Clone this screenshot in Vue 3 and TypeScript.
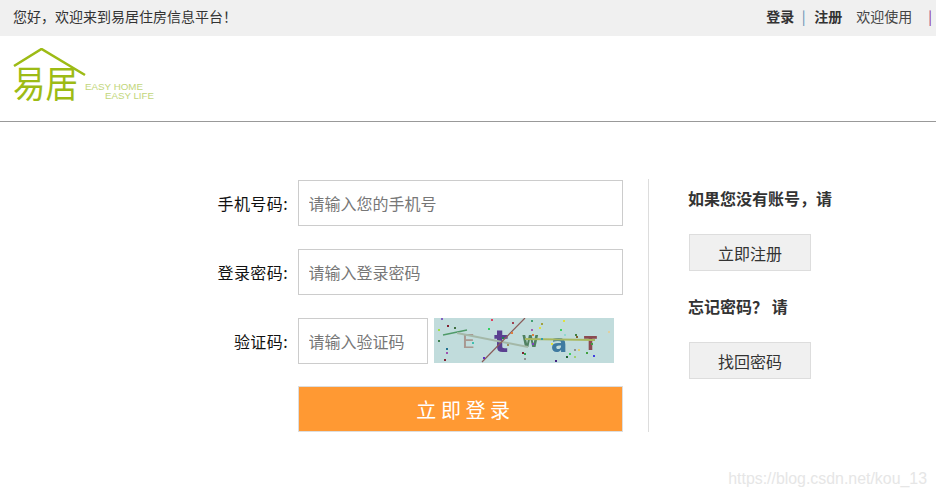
<script setup lang="ts">
const dots: [number, number, string][] = [
  [441,318,'#8060c0'],[491,319,'#e04060'],[447,325,'#802030'],[454,327,'#407040'],[438,329,'#a0e040'],[438,340,'#408050'],[488,328,'#30d060'],[512,322,'#a04050'],[511,332,'#e08040'],[531,320,'#40a070'],[541,323,'#a0a040'],[539,327,'#e0e040'],[531,329,'#a060b0'],[563,320,'#e0e040'],[560,329,'#40d060'],[564,334,'#90d8d0'],[575,334,'#408040'],[576,336,'#806030'],[608,331,'#e0d0a0'],[446,348,'#207090'],[446,352,'#a050b0'],[444,359,'#802030'],[483,357,'#6030c0'],[522,352,'#802030'],[524,353,'#30a050'],[524,358,'#909090'],[555,360,'#402080'],[566,356,'#206030'],[574,356,'#a0d070'],[569,353,'#40d060'],[574,349,'#909090'],[578,349,'#e0d070'],[586,352,'#40a040'],[593,355,'#4040e0'],[551,343,'#e0e040'],[591,343,'#40a040'],[541,338,'#30a0b0'],[532,334,'#e08040'],[532,343,'#8040c0'],[502,337,'#208050'],[472,342,'#40c0b0'],[507,344,'#a09060']
]
</script>

<template>
  <div class="page">
    <div class="topbar">
      <span class="hello">您好，欢迎来到易居住房信息平台！</span>
      <div class="toplinks">
        <b>登录</b><i class="sep blue">|</i><b>注册</b><span class="welcome">欢迎使用</span><i class="sep purple">|</i>
      </div>
    </div>

    <header class="header">
      <svg class="logo" width="150" height="62" viewBox="0 0 150 62" aria-label="易居 EASY HOME EASY LIFE">
        <path d="M1 18 L28.5 1 L72 27" fill="none" stroke="#9dbb15" stroke-width="2.6" />
        <text x="0" y="50" class="logo-cn" textLength="65" lengthAdjust="spacingAndGlyphs">易居</text>
        <text x="72" y="41.5" class="logo-en" textLength="58" lengthAdjust="spacingAndGlyphs">EASY HOME</text>
        <text x="92" y="50.5" class="logo-en" textLength="49" lengthAdjust="spacingAndGlyphs">EASY LIFE</text>
      </svg>
    </header>

    <main class="main">
      <form class="form" @submit.prevent>
        <label class="row">
          <span class="label">手机号码:</span>
          <input class="input wide" placeholder="请输入您的手机号" />
        </label>
        <label class="row">
          <span class="label">登录密码:</span>
          <input class="input wide" type="password" placeholder="请输入登录密码" />
        </label>
        <div class="row">
          <span class="label">验证码:</span>
          <input class="input short" placeholder="请输入验证码" />
          <svg class="captcha" width="180" height="45" viewBox="434 318 180 45">
            <rect x="434" y="318" width="180" height="45" fill="#c1dcdc" />
            <g class="soft">
              <text x="462" y="348" class="cap" fill="#a89890" font-size="20">E</text>
              <text x="494" y="352" class="cap bold" fill="#5a3f90" font-size="30">t</text>
              <text x="522" y="347" class="cap bold" fill="#4f8060" font-size="15">W</text>
              <text x="551" y="352" class="cap bold" fill="#3f7aa0" font-size="24">a</text>
              <text x="584" y="350" class="cap bold" fill="#8a4a50" font-size="19">T</text>
            </g>
            <path d="M443 335 L467 330" stroke="#4f9a68" stroke-width="1.3" fill="none" />
            <path d="M457 333 L528 347" stroke="#a4b8a8" stroke-width="2" fill="none" />
            <path d="M525 339 L595 340" stroke="#a8b860" stroke-width="2" fill="none" />
            <path d="M482 362 L525 318" stroke="#8a5a58" stroke-width="1.2" fill="none" />
            <rect v-for="(d, i) in dots" :key="i" :x="d[0]" :y="d[1]" width="2" height="2" :fill="d[2]" />
          </svg>
        </div>
        <div class="row submit-row">
          <span class="label"></span>
          <button class="submit" type="button">立即登录</button>
        </div>
      </form>

      <aside class="side">
        <h3>如果您没有账号，请</h3>
        <button class="side-btn" type="button">立即注册</button>
        <h3 class="forgot">忘记密码？ 请</h3>
        <button class="side-btn" type="button">找回密码</button>
      </aside>
    </main>

    <div class="watermark">https://blog.csdn.net/kou_13</div>
  </div>
</template>

<style>
html, body { margin: 0; background: #fff; }
</style>

<style scoped>
.page {
  position: relative;
  width: 936px;
  height: 497px;
  overflow: hidden;
  font-family: "Noto Sans CJK SC", "Liberation Sans", sans-serif;
  color: #333;
}
.topbar {
  box-sizing: border-box;
  height: 36px;
  background: #f0f0f0;
  display: flex;
  align-items: center;
  justify-content: space-between;
  padding: 0 4px 4px 13px;
  font-size: 14px;
  line-height: 32px;
}
.toplinks { display: flex; align-items: center; }
.toplinks b { font-weight: 700; color: #333; }
.sep { font-style: normal; }
.blue { color: #5b8fb0; margin: 0 8.6px 0 7.5px; }
.purple { color: #8a1a80; margin-left: 16px; }
.welcome { margin-left: 14px; color: #444; }
.header {
  height: 73px;
  border-bottom: 1px solid #999;
  padding: 12px 0 0 13px;
}
.logo { display: block; }
.logo-cn { font-size: 37px; font-weight: 400; fill: #9dbb15; font-family: "Noto Sans CJK SC", sans-serif; }
.logo-en { font-size: 9.5px; fill: #c2d67a; font-family: "Liberation Sans", sans-serif; }
.main {
  display: flex;
  padding: 58px 0 0 210px;
  align-items: flex-start;
}
.form {
  box-sizing: border-box;
  display: flex;
  flex-direction: column;
  gap: 23px;
  width: 439px;
  height: 253px;
  margin-top: -1px;
  padding-top: 1px;
  border-right: 1px solid #ddd;
}
.row {
  display: flex;
  align-items: center;
  height: 46px;
}
.label {
  width: 78px;
  margin-right: 10px;
  text-align: right;
  font-size: 16px;
  letter-spacing: 0.4px;
  color: #111;
}
.input {
  box-sizing: border-box;
  height: 46px;
  border: 1px solid #ccc;
  padding: 0 9.5px;
  font: inherit;
  font-size: 16px;
  outline: none;
  color: #333;
}
.input::placeholder { color: #777; opacity: 1; }
.wide { width: 325px; }
.short { width: 130px; }
.captcha { margin-left: 6px; align-self: flex-start; display: block; }
.soft { filter: blur(0.5px); }
.cap { font-family: "DejaVu Sans", sans-serif; font-weight: 400; }
.bold { font-weight: 700; }
.submit-row { margin-top: -1px; }
.submit {
  box-sizing: border-box;
  width: 325px;
  height: 46px;
  background: #ff9933;
  border: 1px solid #ddd;
  color: #fff;
  font: inherit;
  font-size: 20px;
  letter-spacing: 4.6px;
  padding: 0 0 0 10px;
}
.side {
  margin-left: 39px;
  display: flex;
  flex-direction: column;
  align-items: flex-start;
}
.side h3 {
  margin: 5px 0 0 0;
  font-size: 16px;
  line-height: 26px;
  font-weight: 700;
  color: #333;
}
.side .forgot { margin-top: 22px; }
.side-btn {
  box-sizing: border-box;
  width: 122px;
  height: 37px;
  margin: 23px 0 0 1px;
  border: 1px solid #ddd;
  background: #f0f0f0;
  font: inherit;
  font-size: 16px;
  color: #333;
  padding: 0;
}
.watermark {
  position: absolute;
  right: 9px;
  top: 469px;
  font-family: "Liberation Sans", sans-serif;
  font-size: 15.9px;
  color: #e6e6e6;
  line-height: 20px;
}
</style>
